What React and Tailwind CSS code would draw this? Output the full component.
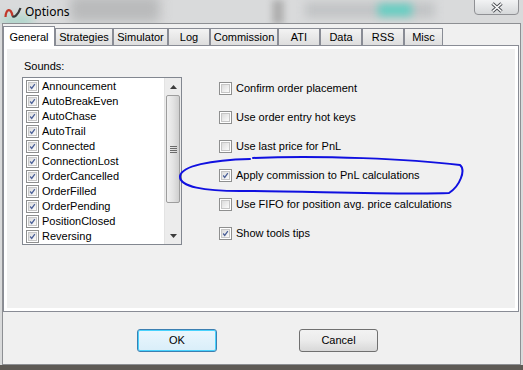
import React from 'react';

const sounds = [
  'Announcement',
  'AutoBreakEven',
  'AutoChase',
  'AutoTrail',
  'Connected',
  'ConnectionLost',
  'OrderCancelled',
  'OrderFilled',
  'OrderPending',
  'PositionClosed',
  'Reversing',
];

const options = [
  { label: 'Confirm order placement', checked: false },
  { label: 'Use order entry hot keys', checked: false },
  { label: 'Use last price for PnL', checked: false },
  { label: 'Apply commission to PnL calculations', checked: true },
  { label: 'Use FIFO for position avg. price calculations', checked: false },
  { label: 'Show tools tips', checked: true },
];

const tabs = [
  { name: 'General', w: 'w-[52px]' },
  { name: 'Strategies', w: 'w-[58px]' },
  { name: 'Simulator', w: 'w-[55px]' },
  { name: 'Log', w: 'w-[42px]' },
  { name: 'Commission', w: 'w-[68px]' },
  { name: 'ATI', w: 'w-[42px]' },
  { name: 'Data', w: 'w-[42px]' },
  { name: 'RSS', w: 'w-[42px]' },
  { name: 'Misc', w: 'w-[39px]' },
];

function Check({ checked }) {
  return (
    <div className="w-[13px] h-[13px] shrink-0 border border-[#8e8f8f] bg-white p-px">
      <div className="w-full h-full border border-[#c6c6c6] bg-gradient-to-br from-[#dcdcdc] to-[#fbfbfb] flex items-center justify-center">
        {checked && (
          <svg width="9" height="9" viewBox="0 0 9 9">
            <path d="M1.5 4.5 L3.5 7 L7.5 1.5" fill="none" stroke="#4a5f97" strokeWidth="1.6" />
          </svg>
        )}
      </div>
    </div>
  );
}

function Logo() {
  return (
    <svg width="18" height="14" viewBox="0 0 18 14">
      <path d="M1.5 12 C2 4, 7 2, 8.5 11" fill="none" stroke="#c0392b" strokeWidth="2.2" />
      <path d="M8.5 11 C10 13, 14 10, 16.5 3" fill="none" stroke="#3a3a3a" strokeWidth="2.2" />
    </svg>
  );
}

export default function App() {
  return (
    <div className="relative w-[523px] h-[370px] overflow-hidden bg-[#d9dadb] font-['Liberation_Sans',Arial,sans-serif] text-[11px] text-black">
      {/* blurred aero glass behind the title */}
      <div className="absolute inset-x-0 top-0 h-[24px] overflow-hidden pointer-events-none">
        <div className="absolute left-[70px] top-[-4px] w-[90px] h-[26px] bg-[#b9babb] blur-[6px]" />
        <div className="absolute left-[272px] top-0 w-[12px] h-[24px] bg-[#b0b0b0] blur-[3px]" />
        <div className="absolute left-[305px] top-[2px] w-[130px] h-[16px] bg-[#c2c4c6] blur-[5px]" />
        <div className="absolute left-[378px] top-[4px] w-[34px] h-[12px] bg-[#62cfc2] blur-[4px]" />
        <div className="absolute left-[2px] top-[16px] w-[30px] h-[10px] bg-[#a9d6c9] blur-[5px]" />
      </div>

      {/* title bar */}
      <div className="relative flex items-center h-[23px] pl-[4px]">
        <Logo />
        <span className="ml-[3px] font-['Noto_Sans',sans-serif] text-[12px] text-black">Options</span>
        <div className="ml-auto mr-[4px] self-start -mt-px w-[45px] h-[16px] rounded-b-[4px] border border-[#8f9094] bg-gradient-to-b from-[#f2f3f4] to-[#d6d8da] flex items-center justify-center">
          <svg width="14" height="11" viewBox="0 0 14 11">
            <path d="M2.5 1.5 L11.5 9.5 M11.5 1.5 L2.5 9.5" stroke="#4a4d52" strokeWidth="3.4" />
            <path d="M2.5 1.5 L11.5 9.5 M11.5 1.5 L2.5 9.5" stroke="#ffffff" strokeWidth="1.6" />
          </svg>
        </div>
      </div>

      {/* client area */}
      <div className="relative mx-[2px] h-[342px] bg-[#f0f0f0] border border-[#8d8f93] flex flex-col">
        <div className="mr-[1px] mt-px">
          {/* tabs */}
          <div className="flex items-end h-[20px]">
            {tabs.map((t, i) =>
              i === 0 ? (
                <div
                  key={t.name}
                  className={`${t.w} h-[20px] -mb-px relative z-10 border border-b-0 border-[#898c95] bg-white flex items-start pt-[2px] justify-center`}
                >
                  {t.name}
                </div>
              ) : (
                <div
                  key={t.name}
                  className={`${t.w} h-[17px] border border-b-0 border-[#898c95] bg-gradient-to-b from-[#f3f3f3] to-[#dedede] flex items-center justify-center`}
                >
                  {t.name}
                </div>
              )
            )}
          </div>

          {/* panel */}
          <div className="h-[267px] border border-[#898c95] bg-white p-[3px]">
            <div className="h-full bg-[#f0f0f0] flex pl-[15px] pt-[10px]">
              <div className="w-[160px] flex flex-col">
                <div className="h-[14px] mb-[4px] pl-[2px] leading-[14px]">Sounds:</div>
                <div className="h-[168px] border border-[#828790] bg-white flex">
                  <div className="flex-1 pt-px">
                    {sounds.map((s) => (
                      <div key={s} className="h-[15px] flex items-center pl-[3px] gap-[3px]">
                        <Check checked />
                        <span className="leading-[15px]">{s}</span>
                      </div>
                    ))}
                  </div>
                  {/* scrollbar */}
                  <div className="w-[17px] bg-[#ececec] flex flex-col border-l border-[#e3e3e3]">
                    <div className="h-[17px] flex items-center justify-center">
                      <svg width="7" height="4" viewBox="0 0 7 4"><path d="M0 4 L3.5 0 L7 4 Z" fill="#3c3c3c" /></svg>
                    </div>
                    <div className="h-[108px] mx-px rounded-[2px] border border-[#9d9d9d] bg-gradient-to-r from-[#f1f1f1] via-[#e3e3e3] to-[#cfcfcf] flex items-center justify-center">
                      <svg width="7" height="7" viewBox="0 0 7 7">
                        <path d="M0 0.5 H7 M0 2.5 H7 M0 4.5 H7 M0 6.5 H7" stroke="#6b6b6b" strokeWidth="1" />
                      </svg>
                    </div>
                    <div className="flex-1" />
                    <div className="h-[17px] flex items-center justify-center">
                      <svg width="7" height="4" viewBox="0 0 7 4"><path d="M0 0 L3.5 4 L7 0 Z" fill="#3c3c3c" /></svg>
                    </div>
                  </div>
                </div>
              </div>

              <div className="ml-[37px] pt-[22px] flex flex-col gap-[14px]">
                {options.map((o) => (
                  <div key={o.label} className="h-[15px] flex items-center gap-[4px]">
                    <Check checked={o.checked} />
                    <span className="leading-[15px]">{o.label}</span>
                  </div>
                ))}
              </div>
            </div>
          </div>
        </div>

        {/* buttons */}
        <div className="flex mt-[17px] pl-[134px]">
          <button className="w-[80px] h-[23px] rounded-[3px] border border-[#3c7fb1] bg-gradient-to-b from-[#eaf6fd] to-[#d9eef9] shadow-[inset_0_0_0_1px_#48d2fd]">
            OK
          </button>
          <button className="ml-[82px] w-[79px] h-[23px] rounded-[3px] border border-[#707070] bg-gradient-to-b from-[#f2f2f2] via-[#ebebeb] to-[#d8d8d8]">
            Cancel
          </button>
        </div>
      </div>

      {/* bottom edge of the window */}
      <div className="h-[5px] bg-[#5e5a55]" />

      {/* hand-drawn highlight */}
      <svg className="absolute inset-0 pointer-events-none" width="523" height="370" viewBox="0 0 523 370">
        <path
          d="M253 158 C320 155, 410 159, 460 165 C466 170, 460 186, 449 193 C400 195, 300 191, 240 191 C205 191, 179 187, 180 176 C182 166, 210 160, 250 159"
          fill="none"
          stroke="#1010e0"
          strokeWidth="2"
          strokeLinecap="round"
        />
      </svg>
    </div>
  );
}
